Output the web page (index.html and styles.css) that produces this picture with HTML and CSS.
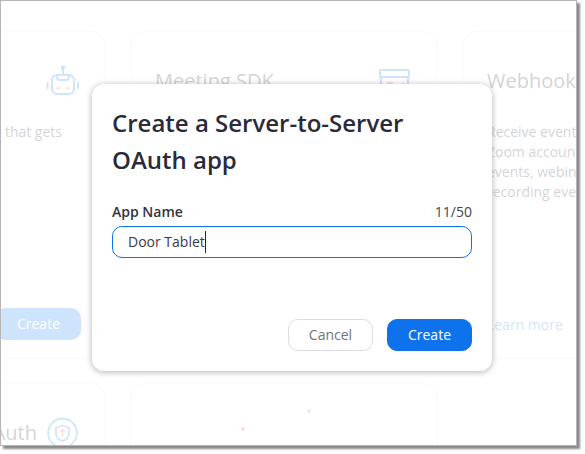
FILE: index.html
```html
<!DOCTYPE html>
<html lang="en">
<head>
<meta charset="utf-8">
<title>Create a Server-to-Server OAuth app</title>
<link rel="stylesheet" href="styles.css">
</head>
<body>
<div class="frame">
  <div class="cards">
    <section class="card">
      <div class="card-head card-head-end">
        <svg class="icon" viewBox="0 0 33 32" fill="none" stroke="#0e72ed" stroke-width="2">
          <circle cx="17" cy="2.500" r="2.200" fill="#0e72ed" stroke="none"/>
          <path d="M17 4v6" />
          <rect x="6" y="10" width="22" height="19" rx="5"/>
          <path d="M11 10v2a3 3 0 0 0 3 3h6a3 3 0 0 0 3-3v-2"/>
          <path d="M1.500 18v5M32 18v5" stroke-linecap="round"/>
          <circle cx="12" cy="23" r="1.600" fill="#ff6a3d" stroke="none"/>
          <circle cx="22" cy="23" r="1.600" fill="#ff6a3d" stroke="none"/>
        </svg>
      </div>
      <p class="card-text card-text-end">Build a Team Chat app that gets</p>
      <div class="card-foot card-foot-end"><span class="card-btn">Create</span></div>
    </section>
    <section class="card">
      <div class="card-head">
        <h2 class="card-title">Meeting SDK</h2>
        <svg class="icon" viewBox="0 0 33 32" fill="none" stroke="#0e72ed" stroke-width="2">
          <path d="M2 12V6a1 1 0 0 1 1-1h27a1 1 0 0 1 1 1v6zM3 12v18h27V12"/>
          <path d="M9 18h6" stroke="#ff6a3d" stroke-width="2.500"/>
          <path d="M21 23l4-4 4 4"/>
        </svg>
      </div>
    </section>
    <section class="card">
      <div class="card-head">
        <h2 class="card-title">Webhook Only App</h2>
      </div>
      <p class="card-text">Receive event notifications from your<br>Zoom account activities such as<br>events, webinars, meetings and<br>recording events.</p>
      <div class="card-foot"><span class="card-link">Learn more</span></div>
    </section>
    <section class="card">
      <div class="card-head card-head-end">
        <h2 class="card-title">OAuth</h2>
        <svg class="icon" viewBox="0 0 32 32" fill="none" stroke="#0e72ed" stroke-width="1.600">
          <circle cx="16" cy="16" r="14.400"/>
          <path d="M16 8.500l6.500 2.300v5.700c0 4-2.800 6.300-6.500 7.500-3.700-1.200-6.500-3.500-6.500-7.500v-5.700z"/>
          <path d="M16 20v-7M13.500 15l2.500-2.500 2.500 2.500" stroke="#ff6a3d"/>
        </svg>
      </div>
    </section>
    <section class="card card-loading">
      <span class="dot dot-red"></span>
      <span class="dot dot-blue"></span>
    </section>
  </div>
  <div class="veil"></div>
  <div class="modal">
    <h1 class="modal-title">Create a Server-to-Server OAuth app</h1>
    <div class="field-head">
      <span class="field-label">App Name</span>
      <span class="field-count">11/50</span>
    </div>
    <div class="field-input"><span class="field-value">Door Tablet</span></div>
    <div class="modal-foot">
      <button class="btn btn-cancel" type="button">Cancel</button>
      <button class="btn btn-create" type="button">Create</button>
    </div>
  </div>
</div>
</body>
</html>
```
FILE: styles.css
```css
* { box-sizing: border-box; }
html, body { margin: 0; padding: 0; background: #fff; }
body {
  width: 585px;
  height: 454px;
  overflow: hidden;
  font-family: "Open Sans", "Liberation Sans", sans-serif;
  color: #232333;
}
.frame {
  position: relative;
  width: 577px;
  height: 446px;
  border: 1px solid #b6b6b6;
  background: #fff;
  box-shadow: 3px 3px 2px #8a8a8a;
  overflow: hidden;
}
.cards {
  display: grid;
  grid-template-columns: repeat(3, 308px);
  grid-template-rows: 328px 300px;
  gap: 24px;
  width: 972px;
  margin-left: -203px;
  padding-top: 30px;
}
.card {
  position: relative;
  display: flex;
  flex-direction: column;
  padding: 32px 25px 18px 24px;
  border: 1px solid #e4e4ed;
  border-radius: 16px;
}
.card-head {
  display: flex;
  justify-content: space-between;
  align-items: center;
  height: 34px;
}
.card-head-end { justify-content: flex-end; gap: 9px; }
.card-title {
  margin: 0;
  font-size: 20px;
  font-weight: 400;
  line-height: 34px;
  white-space: nowrap;
}
.icon { width: 33px; height: 32px; flex: none; margin-right: 1px; }
.card-text {
  margin: 24px 0 0;
  font-size: 14px;
  line-height: 20px;
  white-space: nowrap;
}
.card-text-end { text-align: right; padding-right: 18px; }
.card-foot {
  margin-top: auto;
  display: flex;
  align-items: center;
  height: 32px;
}
.card-foot-end { justify-content: flex-end; margin-right: -1px; }
.card-btn {
  width: 85px;
  height: 32px;
  border-radius: 10px;
  background: #0e72ed;
  color: #fff;
  font-size: 14px;
  line-height: 32px;
  text-align: center;
}
.card-link { color: #0e72ed; font-size: 14px; }
.dot {
  position: absolute;
  width: 4px;
  height: 4px;
  border-radius: 50%;
}
.dot-red { left: 110px; top: 43px; background: #ff5a3d; }
.dot-blue { left: 176px; top: 25px; background: #0e72ed; opacity: .6; }
.veil {
  position: absolute;
  inset: 0;
  background: rgba(255, 255, 255, .8);
}
.modal {
  position: absolute;
  left: 91px;
  top: 83px;
  width: 400px;
  height: 287px;
  display: flex;
  flex-direction: column;
  padding: 20px;
  background: #fff;
  border-radius: 12px;
  box-shadow: 0 1px 6px rgba(35, 35, 51, .35);
}
.modal-title {
  margin: 0;
  font-size: 24px;
  font-weight: 600;
  line-height: 37px;
  color: #2a2a3a;
}
.field-head {
  display: flex;
  justify-content: space-between;
  align-items: center;
  margin-top: 23px;
  height: 20px;
}
.field-label { font-size: 14px; font-weight: 600; color: #33333f; }
.field-count { font-size: 14px; color: #444452; }
.field-input {
  display: flex;
  align-items: center;
  height: 32px;
  margin-top: 5px;
  padding: 0 15px;
  border: 1px solid #0e72ed;
  border-radius: 10px;
  font-size: 14px;
  color: #39394a;
}
.field-value {
  line-height: 22px;
  border-right: 1px solid #232333;
}
.modal-foot {
  margin-top: auto;
  display: flex;
  justify-content: flex-end;
  gap: 14px;
}
.btn {
  width: 85px;
  height: 32px;
  padding: 0;
  border-radius: 10px;
  font-family: inherit;
  font-size: 14px;
  line-height: 30px;
}
.btn-cancel { background: #fff; border: 1px solid #dcdce2; color: #6e7680; }
.btn-create { background: #0e72ed; border: 1px solid #0e72ed; color: #fff; }
```
